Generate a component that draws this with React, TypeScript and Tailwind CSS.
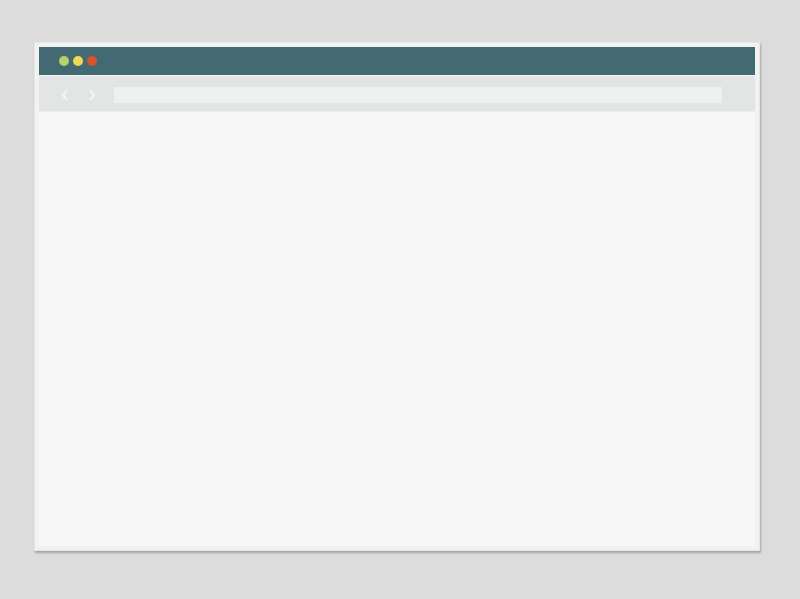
import React from "react";

export default function App() {
  return (
    <div className="w-[800px] h-[599px] bg-[#dcdcdc] pt-[42px] pl-[34px] overflow-hidden">
      <div className="w-[726px] h-[509px] bg-[#f2f2f2] border border-[#e6e6e6] p-[4px] shadow-[1px_2px_2px_rgba(0,0,0,0.25)] flex flex-col">
        <div className="h-[28px] bg-[#436a73] flex items-center gap-[4px] pl-[20px]">
          <span className="w-[10px] h-[10px] rounded-full bg-[#b5d16c]" />
          <span className="w-[10px] h-[10px] rounded-full bg-[#efdb52]" />
          <span className="w-[10px] h-[10px] rounded-full bg-[#d5532f]" />
        </div>
        <div className="h-px bg-[#f4f5f5]" />
        <div className="h-[35px] bg-[#e3e5e5] flex items-center pl-[21px] pr-[33px]">
          <svg width="10" height="14" viewBox="0 0 10 14" className="mt-[2px]">
            <path d="M7 2 L3 7 L7 12" fill="none" stroke="#f2f3f3" strokeWidth="2.5" />
          </svg>
          <svg width="10" height="14" viewBox="0 0 10 14" className="ml-[17px] mt-[2px]">
            <path d="M3 2 L7 7 L3 12" fill="none" stroke="#f2f3f3" strokeWidth="2.5" />
          </svg>
          <div className="ml-[17px] flex-1 h-[16px] mt-[2px] bg-[#eff0f0]" />
        </div>
        <div className="flex-1 bg-[#f7f7f7] border-t border-[#eeeeee]" />
      </div>
    </div>
  );
}
